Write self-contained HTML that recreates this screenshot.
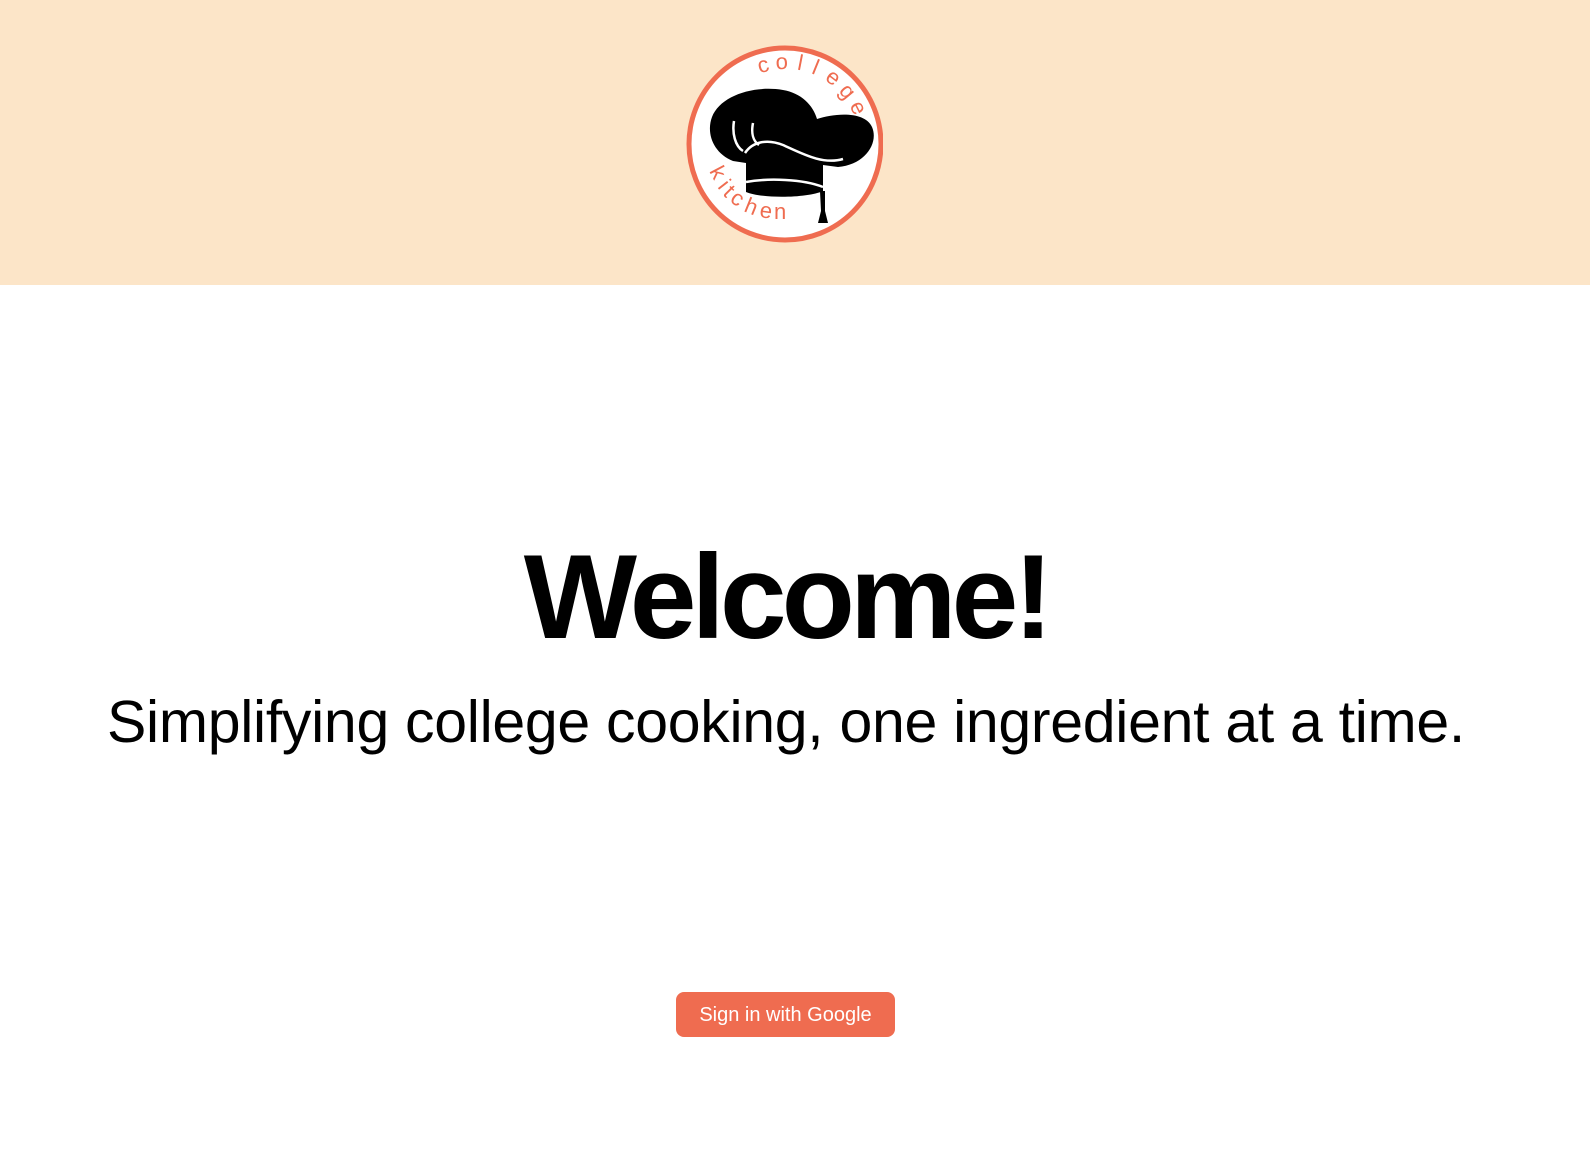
<!DOCTYPE html>
<html><head><meta charset="utf-8"><style>
body{margin:0;width:1590px;height:1158px;background:#fff;font-family:"Liberation Sans",sans-serif;overflow:hidden;position:relative}
.hdr{position:absolute;left:0;top:0;width:1590px;height:285px;background:#fce5c8}
.logo{position:absolute;left:673px;top:41px}
h1{position:absolute;top:532px;left:0;width:1572px;text-align:center;margin:0;font-size:120px;font-weight:bold;letter-spacing:-5px;line-height:130px}
p{position:absolute;top:690px;left:0;width:1572px;text-align:center;margin:0;font-size:59px;letter-spacing:-0.3px;line-height:64px}
.btn{position:absolute;left:676px;top:992px;width:219px;height:45px;background:#ef6c50;border-radius:8px;color:#fff;font-size:20px;line-height:47px;text-align:center}
</style></head><body>
<div class="hdr"></div>
<svg class="logo" width="210" height="210" viewBox="0 0 210 210">
<circle cx="112" cy="103" r="96" fill="#fff" stroke="#ef6c50" stroke-width="5"/>
<path d="M60,120 C40,112 33,92 39,76 C47,55 80,44 110,49 C128,52 140,64 144,78 C162,72 192,70 199,86 C206,102 192,124 165,126 L150,124 L150,150 C135,157 90,158 73,151 L73,122 Z" fill="#000"/>
<path d="M72,112 C80,100 95,98 110,104 C130,113 150,124 170,118" stroke="#fff" stroke-width="2.5" fill="none"/>
<path d="M61,80 C59,92 62,105 70,110 M80,82 C78,92 80,100 86,104" stroke="#fff" stroke-width="2.5" fill="none"/>
<path d="M73,141 C95,137 130,138 150,146" stroke="#fff" stroke-width="2.5" fill="none"/>
<path d="M147,150 L148,170 L145,182 L155,182 L152,170 L152,150 Z" fill="#000"/>
<g font-size="22" fill="#ef6c50" font-family="Liberation Sans,sans-serif" text-anchor="middle">
<text transform="translate(92,31) rotate(-15)">c</text>
<text transform="translate(109,28) rotate(-2)">o</text>
<text transform="translate(126,29) rotate(11)">l</text>
<text transform="translate(140,33) rotate(22)">l</text>
<text transform="translate(156,42) rotate(37)">e</text>
<text transform="translate(169,55) rotate(50)">g</text>
<text transform="translate(179,70) rotate(63)">e</text>
</g>
<g font-size="22" fill="#ef6c50" font-family="Liberation Sans,sans-serif">
<text transform="translate(36,130) rotate(62)">k</text>
<text transform="translate(44,146) rotate(52)">i</text>
<text transform="translate(49,153) rotate(45)">t</text>
<text transform="translate(56,160) rotate(35)">c</text>
<text transform="translate(70,170) rotate(22)">h</text>
<text transform="translate(86,176) rotate(8)">e</text>
<text transform="translate(101,178) rotate(0)">n</text>
</g>
</svg>
<h1>Welcome!</h1>
<p>Simplifying college cooking, one ingredient at a time.</p>
<div class="btn">Sign in with Google</div>
</body></html>
